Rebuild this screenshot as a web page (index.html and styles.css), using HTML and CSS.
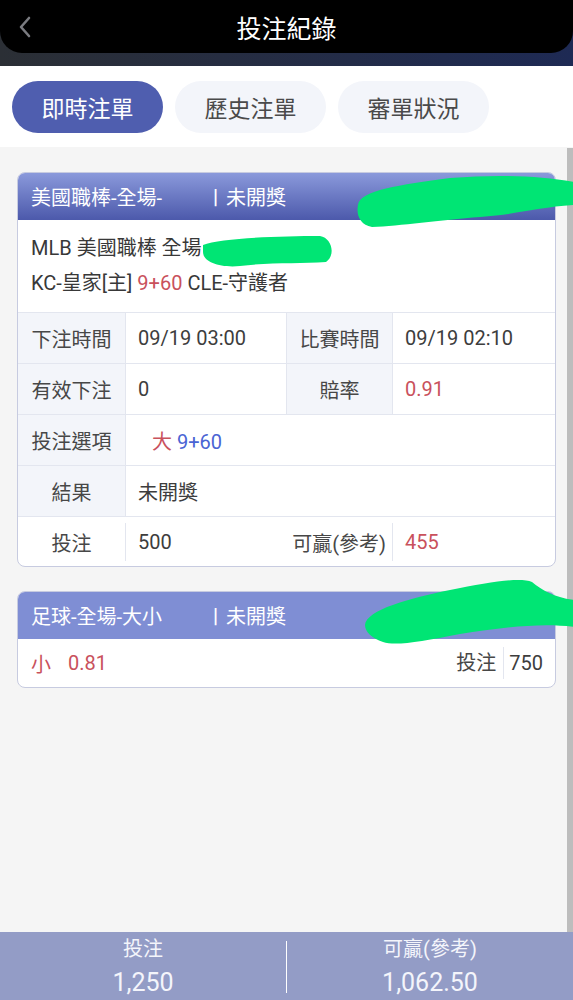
FILE: index.html
```html
<!DOCTYPE html>
<html lang="zh-Hant">
<head>
  <meta charset="UTF-8" />
  <meta name="viewport" content="width=device-width, initial-scale=1" />
  <title>投注紀錄</title>
  <link rel="stylesheet" href="styles.css">
</head>
<body>

  <header class="topbar">
    <div class="nav">
      <span class="back">
        <svg width="16" height="24" viewBox="0 0 16 24"><path d="M12 3 L4 12 L12 21" fill="none" stroke="#7a7b80" stroke-width="2.6" stroke-linecap="round" stroke-linejoin="round"/></svg>
      </span>
      <h1>投注紀錄</h1>
      <span></span>
    </div>
  </header>

  <nav class="tabs">
    <div class="tab active">即時注單</div>
    <div class="tab">歷史注單</div>
    <div class="tab">審單狀況</div>
  </nav>

  <div class="main">
    <div class="list">

      <div class="card">
        <div class="card-head">
          <span class="game">美國職棒-全場-</span>
          <span class="bar">|</span>
          <span>未開獎</span>
        </div>
        <div class="info">
          <div>MLB 美國職棒 全場</div>
          <div>KC-皇家[主] <span class="red">9+60</span> CLE-守護者</div>
        </div>
        <div class="table">
          <div class="row">
            <div class="cell label">下注時間</div>
            <div class="cell">09/19 03:00</div>
            <div class="cell label">比賽時間</div>
            <div class="cell">09/19 02:10</div>
          </div>
          <div class="row">
            <div class="cell label">有效下注</div>
            <div class="cell">0</div>
            <div class="cell label">賠率</div>
            <div class="cell red">0.91</div>
          </div>
          <div class="row">
            <div class="cell label">投注選項</div>
            <div class="cell wide"><span class="pick"><span class="red">大</span> <span class="blue">9+60</span></span></div>
          </div>
          <div class="row">
            <div class="cell label">結果</div>
            <div class="cell wide">未開獎</div>
          </div>
          <div class="row foot">
            <div class="cell"><span class="in center sep">投注</span></div>
            <div class="cell"><span class="in">500</span></div>
            <div class="cell"><span class="in right sep">可贏(參考)</span></div>
            <div class="cell"><span class="in red">455</span></div>
          </div>
        </div>
      </div>

      <div class="card">
        <div class="card-head flat">
          <span class="game">足球-全場-大小</span>
          <span class="bar">|</span>
          <span>未開獎</span>
        </div>
        <div class="brief">
          <span class="red">小</span>
          <span class="red odds">0.81</span>
          <span class="grow"></span>
          <span class="brief-label">投注</span>
          <span class="brief-amount">750</span>
        </div>
      </div>

    </div>
    <div class="scrollbar"></div>
  </div>

  <footer class="summary">
    <div class="sum-col">
      <div class="sum-label">投注</div>
      <div class="sum-value">1,250</div>
    </div>
    <div class="sum-col">
      <div class="sum-label">可贏(參考)</div>
      <div class="sum-value">1,062.50</div>
    </div>
  </footer>

  <!-- redaction marks on the screenshot -->
  <svg class="scribbles" width="573" height="1000" viewBox="0 0 573 1000">
    <g fill="#00e574">
      <path d="M358 205 C 360 190, 400 185, 450 178 C 500 174, 540 176, 575 182 L 575 205 C 540 207, 520 214, 480 217 C 440 220, 400 226, 372 227 C 360 225, 356 215, 358 205 Z"/>
      <path d="M203 245 C 220 238, 280 236, 320 236 C 332 238, 336 255, 326 262 C 300 264, 270 262, 240 266 C 220 268, 203 262, 203 252 Z"/>
      <path d="M365 625 C 366 610, 410 598, 450 590 C 490 582, 520 577, 532 582 C 542 590, 555 598, 575 600 L 575 627 C 540 622, 500 628, 460 634 C 420 642, 395 646, 383 642 C 372 638, 365 632, 365 625 Z"/>
    </g>
  </svg>

</body>
</html>
```

FILE: styles.css
```css
body {
  margin: 0;
  height: 1000px;
  display: flex;
  flex-direction: column;
  overflow: hidden;
  position: relative;
  background: #f5f5f5;
  font-family: Roboto, "Noto Sans CJK TC", sans-serif;
  color: #3d3d3d;
}

.topbar {
  height: 66px;
  background: linear-gradient(90deg, #2b2f35, #1e2a54);
}

.nav {
  height: 53px;
  background: #000;
  border-radius: 0 0 22px 22px;
  display: grid;
  grid-template-columns: 60px 1fr 60px;
  align-items: center;
}

.back {
  padding-left: 17px;
  display: flex;
}

h1 {
  margin: 0;
  text-align: center;
  color: #fff;
  font-size: 25px;
  font-weight: normal;
}

.tabs {
  height: 81px;
  box-sizing: border-box;
  padding: 15px 12px 14px;
  background: #fff;
  display: flex;
  gap: 12px;
}

.tab {
  width: 151px;
  height: 52px;
  border-radius: 26px;
  background: #f3f5fa;
  color: #4a4a4a;
  font-size: 23px;
  display: flex;
  align-items: center;
  justify-content: center;
}

.tab.active {
  background: #4f5eaf;
  color: #fff;
}

.main {
  flex: 1;
  display: flex;
}

.list {
  flex: 1;
  padding: 25px 11px 0 17px;
}

.scrollbar {
  width: 6px;
  margin-top: 1px;
  background: #bdbdbd;
}

.card {
  background: #fff;
  border: 1px solid #c7cbe0;
  border-radius: 8px;
  overflow: hidden;
  margin-bottom: 24px;
}

.card-head {
  height: 47px;
  padding-left: 13px;
  display: flex;
  align-items: center;
  color: #fff;
  font-size: 20px;
  background: linear-gradient(180deg, #8a99db, #4c59ab);
}

.card-head.flat {
  background: #7f8ed4;
}

.game {
  width: 182px;
}

.bar {
  font-weight: bold;
  margin-right: 8px;
}

.info {
  padding: 11px 13px;
  line-height: 35px;
  font-size: 20px;
  color: #383838;
}

.red {
  color: #c9515c;
}

.blue {
  color: #4a64d4;
}

.row {
  display: grid;
  grid-template-columns: 108px 161px 106px 1fr;
  height: 51px;
  box-sizing: border-box;
  border-top: 1px solid #e3e6ef;
  font-size: 20px;
}

.row.foot {
  height: 50px;
}

.cell {
  display: flex;
  align-items: center;
  padding: 0 12px;
  border-right: 1px solid #e3e6ef;
}

.cell:last-child {
  border-right: none;
}

.cell.label {
  justify-content: center;
  padding: 0;
  background: #f3f5fa;
  color: #474747;
}

.cell.wide {
  grid-column: span 3;
}

.pick {
  margin-left: 14px;
}

.row.foot .cell {
  border-right: none;
  padding: 6px 0 5px;
}

.in {
  flex: 1;
  height: 100%;
  display: flex;
  align-items: center;
  padding: 0 12px;
}

.in.center {
  justify-content: center;
  padding: 0;
  color: #474747;
}

.in.right {
  justify-content: flex-end;
  padding: 0 6px 0 0;
  color: #474747;
}

.in.sep {
  border-right: 1px solid #e3e6ef;
}

.brief {
  height: 48px;
  display: flex;
  align-items: center;
  padding: 0 12px 0 13px;
  font-size: 20px;
}

.odds {
  margin-left: 17px;
}

.grow {
  flex: 1;
}

.brief-label {
  padding-right: 7px;
  border-right: 1px solid #e3e6ef;
  line-height: 32px;
  color: #474747;
}

.brief-amount {
  padding-left: 5px;
}

.summary {
  height: 68px;
  background: #939cc6;
  display: flex;
  color: #f4f5fb;
}

.sum-col {
  flex: 1;
  text-align: center;
  padding-top: 4px;
}

.sum-col + .sum-col {
  border-left: 1px solid #fff;
  margin: 9px 0 7px;
  padding-top: 0;
}

.sum-col + .sum-col .sum-label {
  margin-top: -5px;
}

.sum-label {
  font-size: 20px;
  line-height: 26px;
}

.sum-value {
  font-size: 25px;
  line-height: 34px;
  margin-top: 4px;
}

.scribbles {
  position: absolute;
  top: 0;
  left: 0;
  pointer-events: none;
}
```
